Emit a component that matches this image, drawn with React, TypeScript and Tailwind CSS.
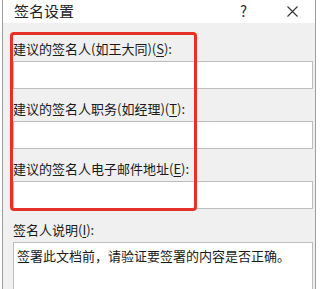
import React from 'react'

const font = { fontFamily: '"Noto Sans CJK SC", "Noto Sans", sans-serif' }

const Field = ({ label, hotkey }: { label: string; hotkey: string }) => (
    <div className="flex flex-col">
        <label className="h-[17px] text-[13px] leading-[17px] text-[#1a1a1a]">
            {label}(<span className="underline underline-offset-2">{hotkey}</span>):
        </label>
        <input className="mt-[4px] h-[28px] w-[300px] border border-[#bdbdbd] bg-white outline-none" />
    </div>
)

const App: React.FC = () => {
    return (
        <div className="relative h-[289px] w-[320px] overflow-hidden bg-white" style={font}>
            <div className="ml-[2px] flex h-full w-[314px] flex-col border-x border-[#9e9e9e]">
                <div className="flex h-[30px] items-center bg-white pl-[11px]">
                    <span className="text-[15px] text-[#222]">签名设置</span>
                    <span className="ml-auto mr-[40px] text-[15px] text-[#333]">?</span>
                    <svg width="11" height="11" viewBox="0 0 11 11" className="mr-[17px]">
                        <path d="M0.5 0.5 L10.5 10.5 M10.5 0.5 L0.5 10.5" stroke="#333" strokeWidth="1.1" />
                    </svg>
                </div>
                <div className="flex flex-1 flex-col bg-[#f0f0f0] pl-[10px] pt-[17px]">
                    <div className="flex flex-col gap-[11px]">
                        <Field label="建议的签名人(如王大同)" hotkey="S" />
                        <Field label="建议的签名人职务(如经理)" hotkey="T" />
                        <Field label="建议的签名人电子邮件地址" hotkey="E" />
                    </div>
                    <div className="mt-[12px] flex flex-col">
                        <label className="h-[17px] text-[13px] leading-[17px] text-[#1a1a1a]">
                            签名人说明(<span className="underline underline-offset-2">I</span>):
                        </label>
                        <div className="mt-[4px] h-[60px] w-[300px] border border-[#bdbdbd] bg-white px-[3px] pt-[4px] text-[13px] leading-[17px] text-[#1a1a1a]">
                            签署此文档前，请验证要签署的内容是否正确。
                        </div>
                    </div>
                </div>
            </div>
            <div className="pointer-events-none absolute left-[10px] top-[32px] h-[179px] w-[187px] rounded-[4px] border-[3px] border-[#e8302a]" />
        </div>
    )
}

export default App
